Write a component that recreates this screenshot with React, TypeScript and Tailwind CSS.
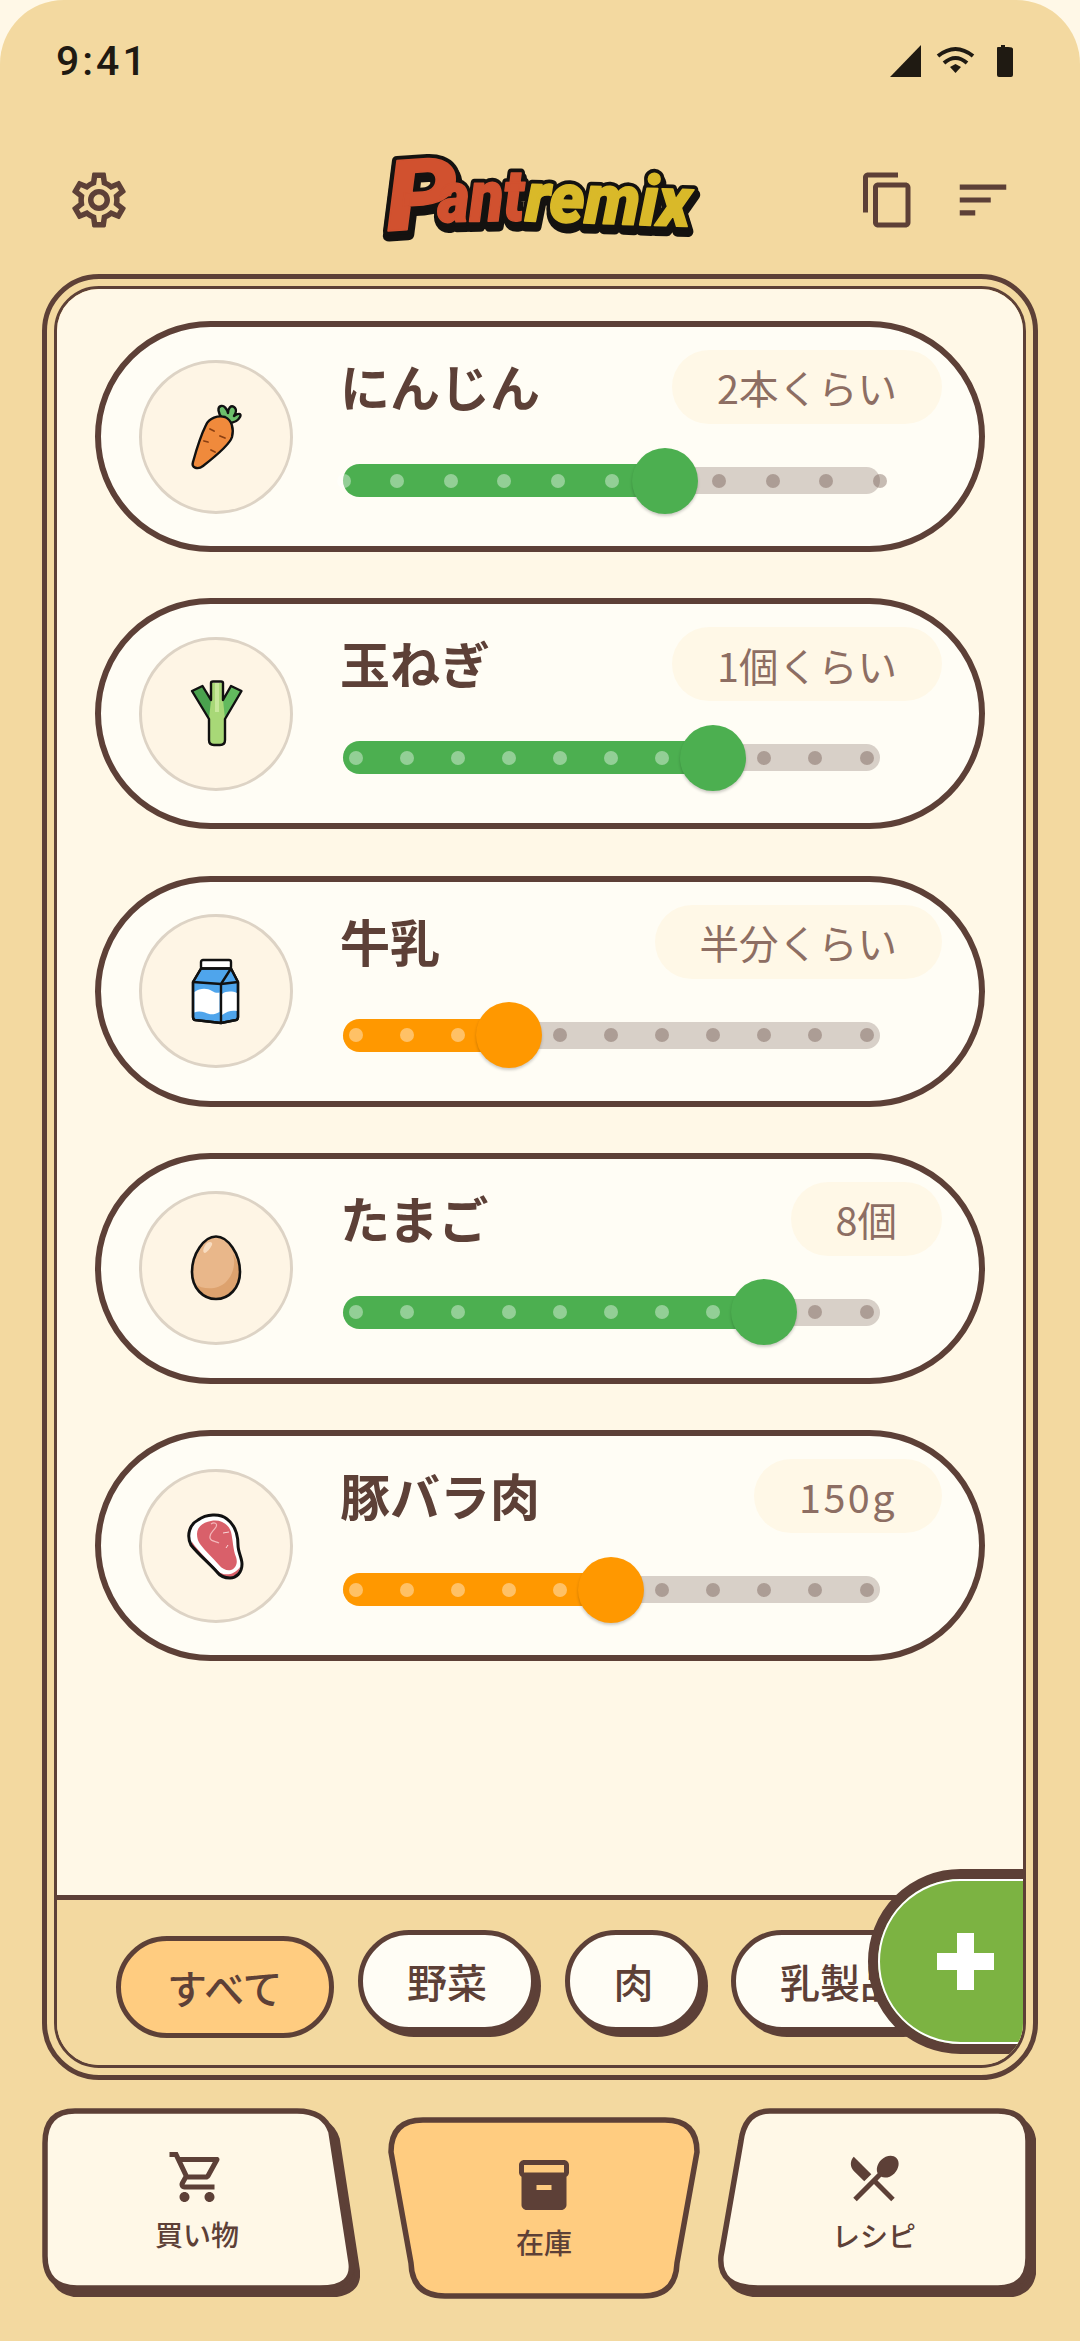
import React from "react";

const BROWN = "#5D4037";

function MatIcon({ d, size = 60, color = BROWN }: { d: string; size?: number; color?: string }) {
  return (
    <svg width={size} height={size} viewBox="0 0 24 24" fill={color} className="block shrink-0">
      <path d={d} />
    </svg>
  );
}

const GEAR =
  "M19.43 12.98c.04-.32.07-.64.07-.98 0-.34-.03-.66-.07-.98l2.11-1.65c.19-.15.24-.42.12-.64l-2-3.46c-.09-.16-.26-.25-.44-.25-.06 0-.12.01-.17.03l-2.49 1c-.52-.4-1.08-.73-1.69-.98l-.38-2.65C14.46 2.18 14.25 2 14 2h-4c-.25 0-.46.18-.49.42l-.38 2.65c-.61.25-1.17.59-1.69.98l-2.49-1c-.06-.02-.12-.03-.18-.03-.17 0-.34.09-.43.25l-2 3.46c-.13.22-.07.49.12.64l2.11 1.65c-.04.32-.07.65-.07.98 0 .33.03.66.07.98l-2.11 1.65c-.19.15-.24.42-.12.64l2 3.46c.09.16.26.25.44.25.06 0 .12-.01.17-.03l2.49-1c.52.4 1.08.73 1.69.98l.38 2.65c.03.24.24.42.49.42h4c.25 0 .46-.18.49-.42l.38-2.65c.61-.25 1.17-.59 1.69-.98l2.49 1c.06.02.12.03.18.03.17 0 .34-.09.43-.25l2-3.46c.12-.22.07-.49-.12-.64l-2.11-1.65zm-1.98-1.71c.04.31.05.52.05.73 0 .21-.02.43-.05.73l-.14 1.13.89.7 1.08.84-.7 1.21-1.27-.51-1.04-.42-.9.68c-.43.32-.84.56-1.25.73l-1.06.43-.16 1.13-.2 1.35h-1.4l-.19-1.35-.16-1.13-1.06-.43c-.43-.18-.83-.41-1.23-.71l-.91-.7-1.06.43-1.27.51-.7-1.21 1.08-.84.89-.7-.14-1.13c-.03-.31-.05-.54-.05-.74s.02-.43.05-.73l.14-1.13-.89-.7-1.08-.84.7-1.21 1.27.51 1.04.42.9-.68c.43-.32.84-.56 1.25-.73l1.06-.43.16-1.13.2-1.35h1.39l.19 1.35.16 1.13 1.06.43c.43.18.83.41 1.23.71l.91.7 1.06-.43 1.27-.51.7 1.21-1.07.85-.89.7.14 1.13zM12 8c-2.21 0-4 1.79-4 4s1.79 4 4 4 4-1.79 4-4-1.79-4-4-4zm0 6c-1.1 0-2-.9-2-2s.9-2 2-2 2 .9 2 2-.9 2-2 2z";
const COPY =
  "M16 1H4c-1.1 0-2 .9-2 2v14h2V3h12V1zm3 4H8c-1.1 0-2 .9-2 2v14c0 1.1.9 2 2 2h11c1.1 0 2-.9 2-2V7c0-1.1-.9-2-2-2zm0 16H8V7h11v14z";
const SORT = "M3 18h6v-2H3v2zM3 6v2h18V6H3zm0 7h12v-2H3v2z";
const CART =
  "M15.55 13c.75 0 1.41-.41 1.75-1.03l3.58-6.49c.37-.66-.11-1.48-.87-1.48H5.21l-.94-2H1v2h2l3.6 7.59-1.35 2.44C4.52 15.37 5.48 17 7 17h12v-2H7l1.1-2h7.45zM6.16 6h12.15l-2.76 5H8.53L6.16 6zM7 18c-1.1 0-1.99.9-1.99 2S5.9 22 7 22s2-.9 2-2-.9-2-2-2zm10 0c-1.1 0-1.99.9-1.99 2s.89 2 1.99 2 2-.9 2-2-.9-2-2-2z";
const BOX =
  "M20 2H4c-1 0-2 .9-2 2v3.01c0 .72.43 1.34 1 1.69V20c0 1.1 1.1 2 2 2h14c.9 0 2-.9 2-2V8.7c.57-.35 1-.97 1-1.69V4c0-1.1-1-2-2-2zm-5 12H9v-2h6v2zm5-7H4V4l16-.02V7z";
const FORK =
  "m8.1 13.34 2.83-2.83L3.91 3.5c-1.56 1.56-1.56 4.09 0 5.66l4.19 4.18zm6.78-1.81c1.53.71 3.68.21 5.27-1.38 1.91-1.91 2.28-4.65.81-6.12-1.46-1.46-4.2-1.1-6.12.81-1.59 1.59-2.09 3.74-1.38 5.27L3.7 19.87l1.41 1.41L12 14.41l6.88 6.88 1.41-1.41L13.41 13l1.47-1.47z";

function Carrot() {
  return (
    <svg width="72" height="72" viewBox="0 0 72 72" className="block">
      <g stroke="#111" strokeWidth="2.4" strokeLinejoin="round" strokeLinecap="round">
        <path d="M42 17C38 12 37 6 41 5C44 4 47 8 48 12C48 7 51 4 54 6C57 8 56 12 54 15C58 12 62 12 60 16C58 20 53 22 48 22Z" fill="#6CBF6B" />
        <path d="M13 61C16 50 22 32 26 24C29 17 38 14 45 16C52 19 54 28 52 36C50 43 32 58 23 65C18 69 11 67 13 61Z" fill="#F08A3C" />
      </g>
      <g stroke="#8A3F12" strokeWidth="1.8" strokeLinecap="round" fill="none">
        <path d="M30 28L34 30" />
        <path d="M40 35L45 37" />
        <path d="M24 40L28 41" />
        <path d="M31 49L35 51" />
      </g>
    </svg>
  );
}

function Leek() {
  return (
    <svg width="72" height="72" viewBox="0 0 72 72" className="block">
      <path d="M12 13L22.5 8L31 22V41H29Z" fill="#4AA24E" />
      <path d="M61.5 13L51 8L43 22V41H45Z" fill="#62BA5E" />
      <path d="M31 5H43V22L45 41V62Q45 67 40 67H34Q29 67 29 62V41L31 22Z" fill="#A8D877" />
      <path d="M35 5H39V34H35Z" fill="#C7E89B" />
      <path d="M29 41L12 13L22.5 8L31 22V5Q31 3.5 33 3.5H41Q43 3.5 43 5V22L51 8L61.5 13L45 41V62Q45 67 40 67H34Q29 67 29 62Z" fill="none" stroke="#111" strokeWidth="2.4" strokeLinejoin="round" />
    </svg>
  );
}

function Milk() {
  return (
    <svg width="72" height="72" viewBox="0 0 72 72" className="block">
      <g stroke="#111" strokeWidth="2.4" strokeLinejoin="round">
        <rect x="21" y="5" width="30" height="9" rx="2" fill="#fff" />
        <path d="M21 13.5H51L58 27V62Q58 64.5 56 65L41 68L15 65Q13 64.5 13 62V27Z" fill="#4FA5EC" />
      </g>
      <path d="M14.5 37C20 33 27 33 32 36C35 38 38 38 39.5 37.5V57C34 60 30 60 25 57.5C21 56 17 56 14.5 57.5Z" fill="#fff" />
      <path d="M42 39C46 36 52 36 57 38V56C52 55 47 56 42 60Z" fill="#fff" />
      <g stroke="#111" strokeWidth="2.4" strokeLinejoin="round" fill="none">
        <path d="M13 27L41 29L51 13.5" />
        <path d="M41 29V68" />
        <path d="M41 29L58 27" />
        <path d="M21 13.5H51L58 27V62Q58 64.5 56 65L41 68L15 65Q13 64.5 13 62V27Z" />
      </g>
    </svg>
  );
}

function Egg() {
  return (
    <svg width="72" height="72" viewBox="0 0 72 72" className="block">
      <path d="M36 4.5C48 4.5 60 22 60 40C60 56 49 67 36 67C23 67 12 56 12 40C12 22 24 4.5 36 4.5Z" fill="#E9B78A" />
      <path d="M53 22C58 30 60 36 60 40C60 56 49 67 36 67C26 67 18 61 14 52C24 58 38 58 46 50C53 43 56 32 53 22Z" fill="#DDA26E" />
      <path d="M27 11C30 9 33 10 32 13C30 17 27 20 25 21C22 21 23 15 27 11Z" fill="#F8DCC0" />
      <path d="M36 4.5C48 4.5 60 22 60 40C60 56 49 67 36 67C23 67 12 56 12 40C12 22 24 4.5 36 4.5Z" fill="none" stroke="#111" strokeWidth="2.6" />
    </svg>
  );
}

function Steak() {
  return (
    <svg width="72" height="72" viewBox="0 0 72 72" className="block">
      <path d="M11 35C6 25 10 14 18 10C26 4 40 3 47 9C55 15 58 25 58 35C58 42 62 48 62 54C62 63 56 68 50 68C44 68 40 66 37 62C30 54 18 44 11 35Z" fill="#fff" />
      <path d="M12 32C18 41 30 52 38 61C43 66 54 66 60 57C60 62 55 67 50 67C44 67 40 65 37 61C30 54 18 44 12 36Z" fill="#D9606A" />
      <path d="M17 24C17 17 23 12 31 11C40 9 49 14 51 22C53 30 53 40 56 47C58 53 56 58 51 60C47 61 42 59 39 55C33 48 25 41 20 34C18 31 17 28 17 24Z" fill="#D9606A" />
      <path d="M31 14C34 12 38 13 36 17C33 22 29 23 30 28C31 32 36 31 39 33" fill="none" stroke="#F3B8BB" strokeWidth="1.2" />
      <path d="M43 23L49 22M46 38L48 35" fill="none" stroke="#F9DADA" strokeWidth="1" />
      <path d="M11 35C6 25 10 14 18 10C26 4 40 3 47 9C55 15 58 25 58 35C58 42 62 48 62 54C62 63 56 68 50 68C44 68 40 66 37 62C30 54 18 44 11 35Z" fill="none" stroke="#111" strokeWidth="3" strokeLinejoin="round" />
    </svg>
  );
}

type Item = {
  name: string;
  value: string;
  icon: React.ReactNode;
  step: number;
  color: "green" | "orange";
  from: number;
  to: number;
  spaced?: boolean;
};

const items: Item[] = [
  { name: "にんじん", value: "2本くらい", icon: <Carrot />, step: 6, color: "green", from: 0.5, to: 537 },
  { name: "玉ねぎ", value: "1個くらい", icon: <Leek />, step: 7, color: "green", from: 12.5, to: 523.5 },
  { name: "牛乳", value: "半分くらい", icon: <Milk />, step: 3, color: "orange", from: 12.5, to: 523.5 },
  { name: "たまご", value: "8個", icon: <Egg />, step: 8, color: "green", from: 12.5, to: 523.5 },
  { name: "豚バラ肉", value: "150g", icon: <Steak />, step: 5, color: "orange", from: 12.5, to: 523.5, spaced: true },
];

function Slider({ item }: { item: Item }) {
  const gap = (item.to - item.from) / 10;
  const thumb = item.from + gap * item.step;
  const isGreen = item.color === "green";
  return (
    <div className="relative mt-[23.5px] h-[66px] w-[537px]">
      <div className="absolute left-0 right-0 top-[19.5px] h-[27px] rounded-full bg-[#D8D0C8]" />
      <div
        className={`absolute left-0 top-[16.5px] h-[33px] rounded-full ${isGreen ? "bg-[#4CAF50]" : "bg-[#FF9800]"}`}
        style={{ width: thumb }}
      />
      {Array.from({ length: 11 }).map((_, i) => (
        <div
          key={i}
          className={`absolute top-[26px] h-[14px] w-[14px] -translate-x-1/2 rounded-full ${i < item.step ? "bg-white/40" : "bg-[#5D4037]/35"}`}
          style={{ left: item.from + gap * i }}
        />
      ))}
      <div
        className={`absolute top-0 h-[66px] w-[66px] -translate-x-1/2 rounded-full shadow-[0_2px_3px_rgba(0,0,0,0.2)] ${isGreen ? "bg-[#4CAF50]" : "bg-[#FF9800]"}`}
        style={{ left: thumb }}
      />
    </div>
  );
}

function Card({ item }: { item: Item }) {
  return (
    <div className="flex h-[231px] w-[890px] shrink-0 items-center gap-[50px] rounded-full border-[6px] border-[#5D4037] bg-[#FFFDF5] pl-[38px] pr-[37px]">
      <div className="flex h-[154px] w-[154px] shrink-0 items-center justify-center rounded-full border-[3px] border-[#DDD3C5] bg-[#FEF5E5]">
        {item.icon}
      </div>
      <div className="flex h-full flex-1 flex-col pt-[23px]">
        <div className="flex h-[74px] items-center justify-between">
          <span className="-ml-[3px] -translate-y-[2px] text-[50px] font-bold leading-none text-[#5D4037]">{item.name}</span>
          <span
            className={`flex h-[74px] items-center rounded-full bg-[#FFF8E7] px-[45px] text-[39.5px] leading-none text-[#8D6E63] ${item.spaced ? "tracking-[2.5px]" : ""}`}
          >
            {item.value}
          </span>
        </div>
        <Slider item={item} />
      </div>
    </div>
  );
}

function Chip({ label, active }: { label: string; active?: boolean }) {
  return (
    <div
      className={`flex h-[102px] shrink-0 items-center rounded-full border-[5px] border-[#5D4037] text-[40px] font-medium leading-none text-[#5D4037] ${
        active
          ? "translate-x-[4px] translate-y-[6px] bg-[#FFCC80] px-[46px]"
          : "bg-[#FFFDF5] px-[44px] shadow-[5px_5px_0_#5D4037]"
      }`}
    >
      {label}
    </div>
  );
}

function Logo() {
  const f = { fontFamily: "Roboto, 'Liberation Sans', sans-serif", fontWeight: 900, fontStyle: "italic" as const };
  const layer = (fillA: string, fillB: string, sw: number, dx: number, dy: number) => (
    <g transform={`translate(${dx} ${dy + 15})`} strokeWidth={sw} strokeLinejoin="round" {...f}>
      <text fontSize="98" fill={fillA} stroke={fillA} transform="translate(18 81) rotate(-4) scale(1.15 1)">P</text>
      <text fontSize="72" fill={fillA} stroke={fillA} transform="translate(68 72) rotate(-1) scale(0.86 1)">ant</text>
      <text fontSize="70" fill={fillB} stroke={fillB} transform="translate(155 71) rotate(2) scale(0.95 1)">remix</text>
    </g>
  );
  return (
    <svg width="340" height="130" viewBox="0 0 340 130" className="block overflow-visible">
      {layer("#141210", "#141210", 11, 1, 5)}
      {layer("#141210", "#141210", 9, 0, 0)}
      {layer("#D1512F", "#D9B929", 1.6, 0, 0)}
    </svg>
  );
}

function NavTab({
  label,
  icon,
  width,
  height,
  path,
  fill,
  shadow,
  pt,
  mt,
  shift,
}: {
  label: string;
  icon: string;
  width: string;
  height: number;
  path: string;
  fill: string;
  shadow: boolean;
  pt: string;
  mt: string;
  shift: string;
}) {
  const w = width === "w-[312px]" ? 312 : 318;
  return (
    <div className={`relative shrink-0 ${width} ${mt}`} style={{ height }}>
      <svg width={w} height={height} viewBox={`0 0 ${w} ${height}`} className="absolute inset-0">
        {shadow && <path d={path} fill={BROWN} stroke={BROWN} strokeWidth="5.5" transform="translate(6 7)" />}
        <path d={path} fill={fill} stroke={BROWN} strokeWidth="5.5" strokeLinejoin="round" />
      </svg>
      <div className={`relative flex flex-col items-center ${pt} ${shift}`}>
        <MatIcon d={icon} size={60} />
        <span className="mt-[9px] text-[28px] font-medium leading-[36px] text-[#5D4037]">{label}</span>
      </div>
    </div>
  );
}

export default function App() {
  return (
    <div className="h-[2341px] w-[1080px] overflow-hidden bg-[#FFF8E7] font-['Noto_Sans_CJK_JP','Noto_Sans',sans-serif]">
      <div className="flex h-full flex-col rounded-t-[64px] bg-[#F3D9A0]">
        {/* status bar */}
        <div className="flex h-[126px] shrink-0 items-start justify-between pl-[56px] pr-[66px] pt-[33px]">
          <span className="font-['Roboto',sans-serif] text-[41px] font-medium leading-[56px] tracking-[3px] text-[#1F1A12]">9:41</span>
          <svg width="124" height="36" viewBox="0 0 124 36" className="mt-[10px] block" fill="#1F1A12">
            <path d="M0 34L31 2V34Z" />
            <path d="M48 13Q65.5 -1 83 13" fill="none" stroke="#1F1A12" strokeWidth="4" />
            <path d="M54 20Q65.5 10 77 20" fill="none" stroke="#1F1A12" strokeWidth="4" />
            <path d="M65.5 30L60 24L65.5 21L71 24Z" />
            <path d="M107 5Q107 4 108 4H111V2H115V4H118Q123 4 123 6V32Q123 34 121 34H109Q107 34 107 32Z" />
          </svg>
        </div>

        {/* header */}
        <div className="grid h-[148px] shrink-0 grid-cols-[1fr_auto_1fr] items-center px-[66px]">
          <MatIcon d={GEAR} size={66} />
          <Logo />
          <div className="flex items-center justify-self-end gap-[34px]">
            <MatIcon d={COPY} size={60} />
            <MatIcon d={SORT} size={62} />
          </div>
        </div>

        {/* main panel */}
        <div className="mx-[42px] h-[1806px] shrink-0 rounded-[57px] border-[5px] border-[#5D4037] p-[7px]">
          <div className="relative flex h-full flex-col overflow-hidden rounded-[45px] border-[3px] border-[#5D4037]">
            <div className="flex flex-1 flex-col gap-[46.3px] bg-[#FFF8E7] px-[38px] pt-[32px]">
              {items.map((it) => (
                <Card key={it.name} item={it} />
              ))}
            </div>
            <div className="h-[170px] shrink-0 overflow-hidden border-t-[5px] border-[#5D4037] bg-[#F3D9A0]">
              <div className="flex gap-[28.5px] pl-[55px] pt-[30px]">
                <Chip label="すべて" active />
                <Chip label="野菜" />
                <Chip label="肉" />
                <Chip label="乳製品" />
              </div>
            </div>
            {/* floating add button */}
            <div className="absolute bottom-[11px] left-[811px] flex h-[185px] w-[300px] items-center rounded-full border-[10px] border-[#5D4037] bg-[#7CB342] outline-2 -outline-offset-[12px] outline-white">
              <div className="relative ml-[59px] h-[57px] w-[57px]">
                <div className="absolute left-[20px] top-0 h-[57px] w-[17px] bg-white" />
                <div className="absolute left-0 top-[20px] h-[17px] w-[57px] bg-white" />
              </div>
            </div>
          </div>
        </div>

        {/* bottom nav */}
        <div className="flex items-start pl-[42px] pt-[28px]">
          <NavTab
            label="買い物"
            icon={CART}
            width="w-[318px]"
            height={189}
            path="M33 3H255Q282 3 289 24L309 154Q313 180 278 180H35Q3 180 3 148V35Q3 3 33 3Z"
            fill="#FFF8E7"
            shadow
            pt="pt-[39px]"
            mt="mt-0"
            shift="-translate-x-[4px]"
          />
          <div className="w-[28px] shrink-0" />
          <NavTab
            label="在庫"
            icon={BOX}
            width="w-[312px]"
            height={182}
            path="M35 3H277Q309 3 309 35L289 146Q288 179 255 179H57Q24 179 23 146L3 35Q3 3 35 3Z"
            fill="#FFCC80"
            shadow={false}
            pt="pt-[38px]"
            mt="mt-[9px]"
            shift="translate-x-0"
          />
          <div className="w-[18px] shrink-0" />
          <NavTab
            label="レシピ"
            icon={FORK}
            width="w-[318px]"
            height={189}
            path="M52 3H280Q310 3 310 33V150Q310 180 280 180H40Q0 180 3 148L23 33Q27 3 52 3Z"
            fill="#FFF8E7"
            shadow
            pt="pt-[40px]"
            mt="mt-0"
            shift="-translate-x-[3px]"
          />
        </div>
      </div>
    </div>
  );
}
